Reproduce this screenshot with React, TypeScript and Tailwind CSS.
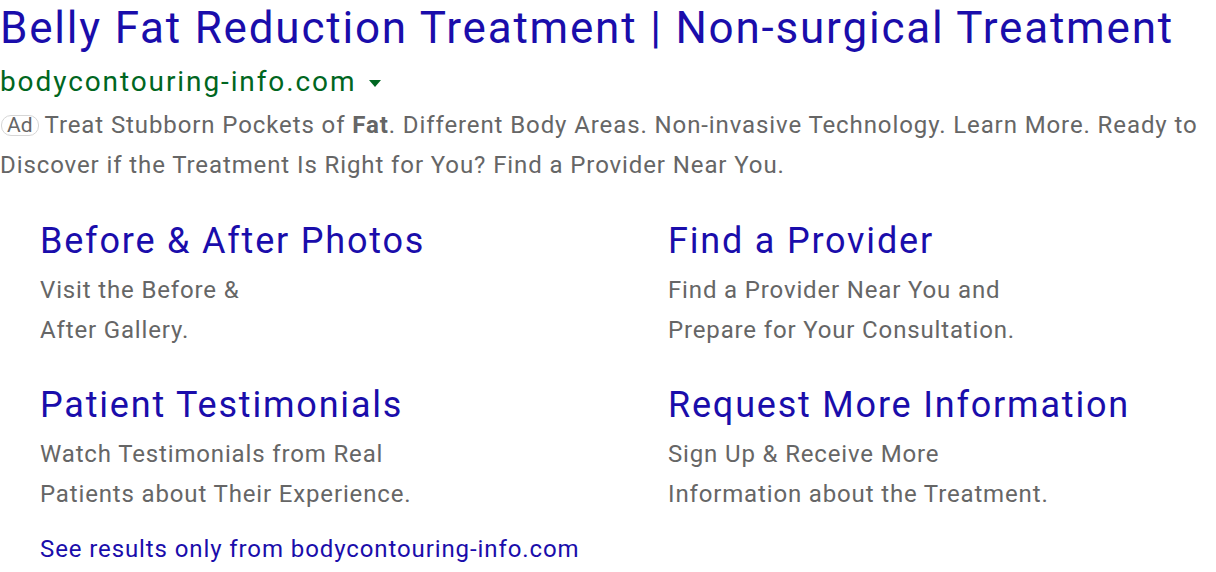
const sitelinks = [
  {
    title: "Before & After Photos",
    lines: ["Visit the Before &", "After Gallery."],
  },
  {
    title: "Find a Provider",
    lines: ["Find a Provider Near You and", "Prepare for Your Consultation."],
  },
  {
    title: "Patient Testimonials",
    lines: ["Watch Testimonials from Real", "Patients about Their Experience."],
  },
  {
    title: "Request More Information",
    lines: ["Sign Up & Receive More", "Information about the Treatment."],
  },
];

export default function App() {
  return (
    <div className="min-h-screen bg-white font-['Roboto',sans-serif] antialiased">
      <h1 className="text-[44px] leading-[56px] tracking-[1.8px] text-[#1a0dab] whitespace-nowrap">
        Belly Fat Reduction Treatment | Non-surgical Treatment
      </h1>

      <div className="mt-2 flex items-center text-[28px] leading-[36px] tracking-[1.9px] text-[#006621]">
        <span>bodycontouring-info.com</span>
        <svg width="12" height="7" viewBox="0 0 12 7" className="ml-[13px] mt-[2px]">
          <path d="M0 0h12L6 7z" fill="#006621" />
        </svg>
      </div>

      <p className="mt-[5px] text-[24px] leading-[40px] tracking-[0.9px] text-[#666666]">
        <span className="ml-px mr-[6px] inline-block rounded-[10px] border border-[#d6d6d6] px-[5px] text-[21px] leading-[19px] tracking-normal align-[1px]">
          Ad
        </span>
        Treat Stubborn Pockets of <b className="font-bold">Fat</b>. Different Body Areas. Non-invasive
        Technology. Learn More. Ready to Discover if the Treatment Is Right for You? Find a Provider
        Near You.
      </p>

      <div className="mt-[32px] grid grid-cols-[628px_1fr] gap-y-[31px] pl-[40px]">
        {sitelinks.map((s) => (
          <div key={s.title}>
            <div className="text-[36px] leading-[48px] tracking-[1.8px] text-[#1a0dab]">{s.title}</div>
            <div className="mt-[5px] text-[24px] leading-[40px] tracking-[0.85px] text-[#666666]">
              {s.lines.map((l) => (
                <div key={l}>{l}</div>
              ))}
            </div>
          </div>
        ))}
      </div>

      <div className="mt-[15px] pl-[40px] text-[24px] leading-[40px] tracking-[0.9px] text-[#1a0dab]">
        See results only from bodycontouring-info.com
      </div>
    </div>
  );
}
